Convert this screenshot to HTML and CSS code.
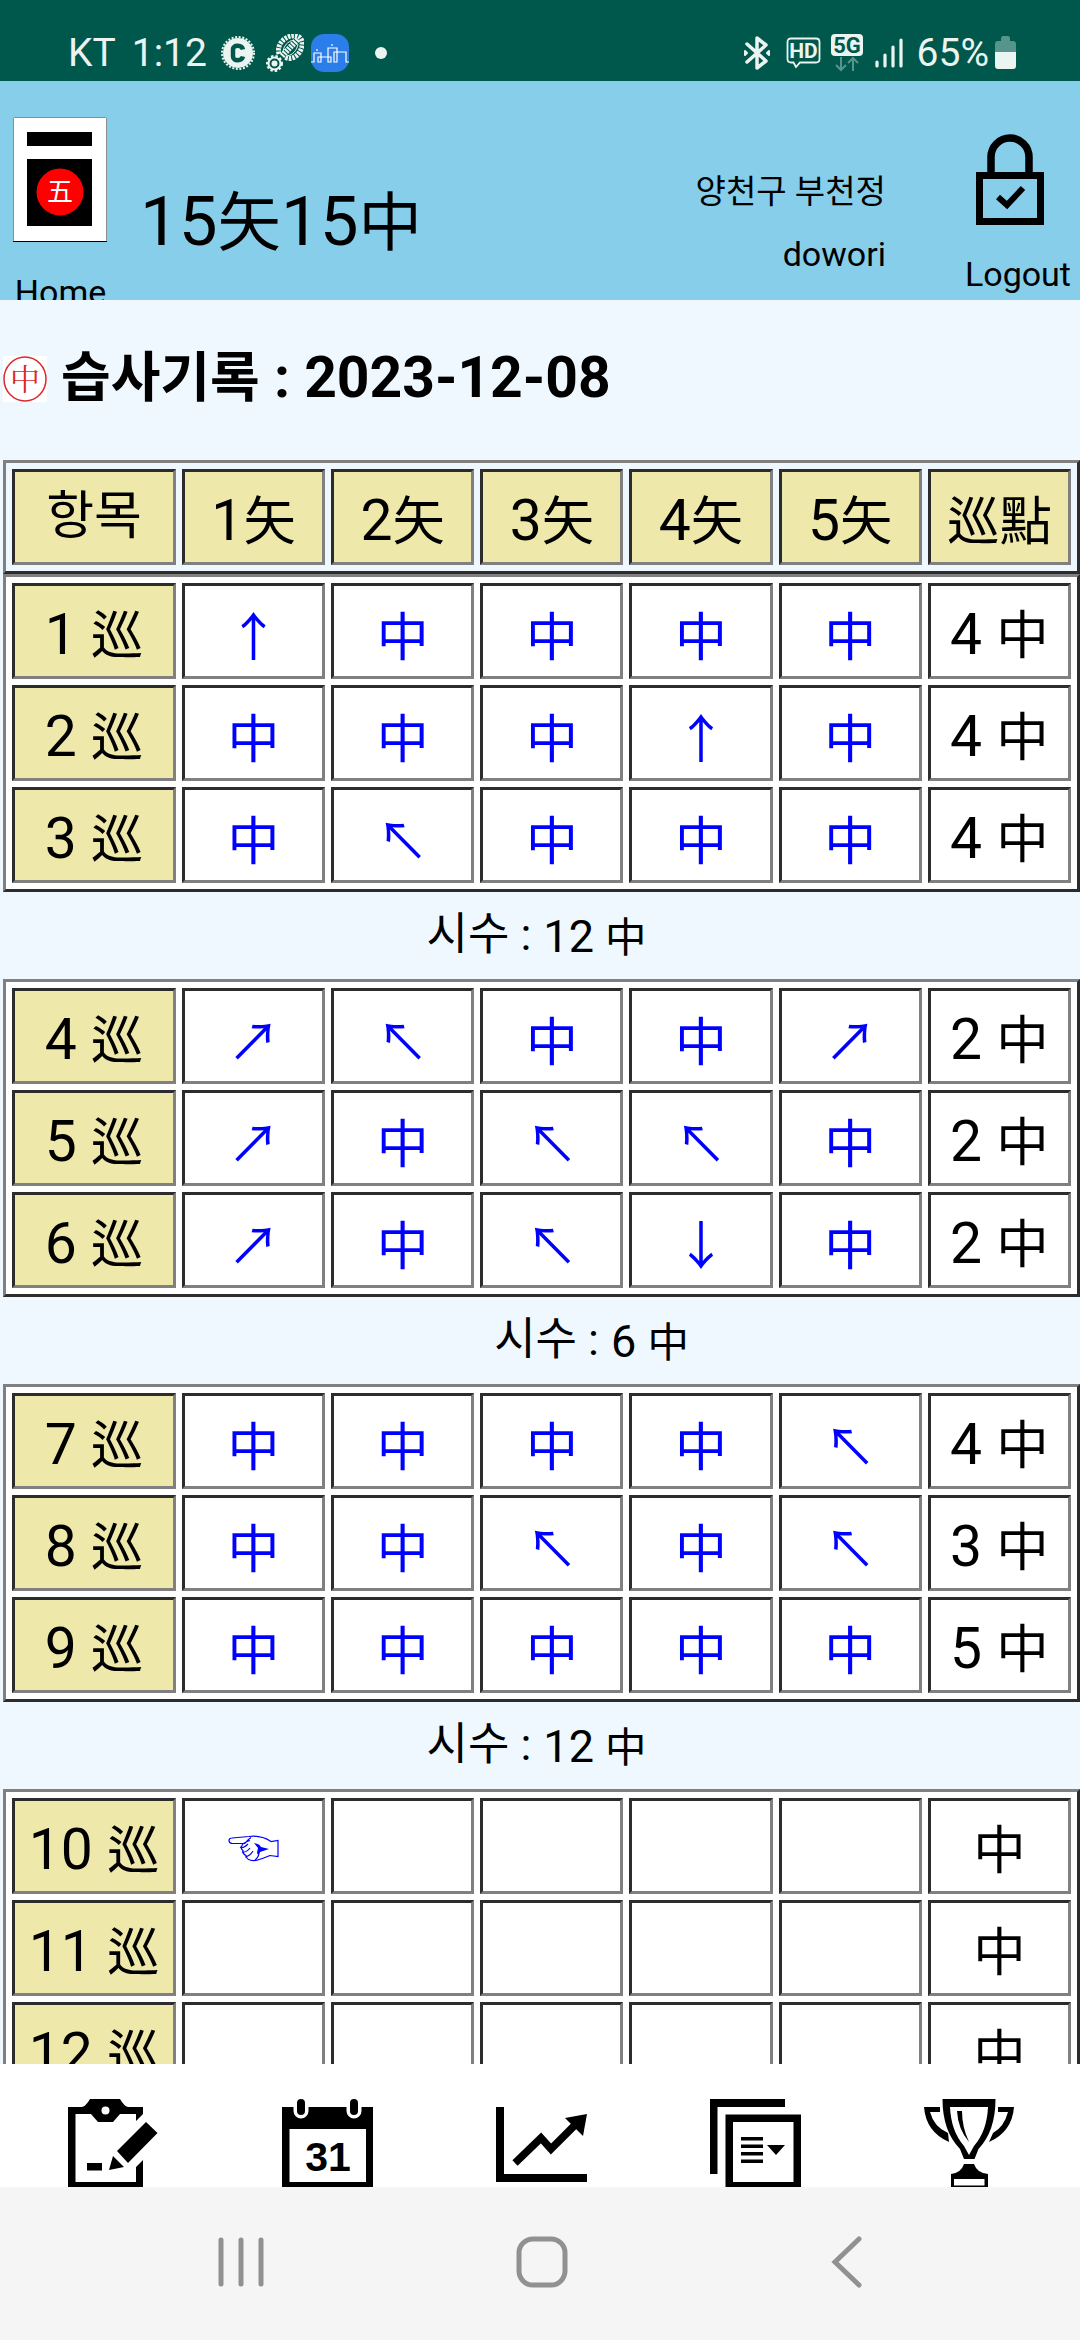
FILE: index.html
```
<!DOCTYPE html>
<html lang="ko">
<head>
    <meta charset="UTF-8">
    <meta name="viewport" content="width=device-width, initial-scale=1.0">
    <title>습사기록</title>
    <link rel="stylesheet" href="styles.css">
</head>
<body>
    <!-- Phone status bar -->
    <div class="status-bar">
        <span class="carrier">KT</span>
        <span class="clock">1:12</span>
        <svg class="badge-icon" width="34" height="36" viewBox="0 0 34 36">
            <circle cx="17" cy="18" r="15" fill="#ebf4f1"/>
            <circle cx="17" cy="18" r="16" fill="none" stroke="#ebf4f1" stroke-width="2" stroke-dasharray="2 1.6"/>
            <path d="M22 14.500C21 10 12 9 12 14.500v7c0 5.500 9 4.500 10 0" fill="none" stroke="#00574b" stroke-width="4.500"/>
        </svg>
        <svg class="shoe-icon" width="38" height="38" viewBox="0 0 38 38" fill="none" stroke="#ebf4f1">
            <circle cx="8.500" cy="29.500" r="6" stroke-width="2"/>
            <circle cx="8.500" cy="29.500" r="7.500" stroke-width="2" stroke-dasharray="2.500 2"/>
            <circle cx="8.500" cy="29.500" r="1.500" stroke-width="3"/>
            <path d="M13 20C10 9 21 0 31 2c8 2 6 15-1 20-4 3-8 3-11 1" stroke-width="5" stroke-dasharray="2.500 1"/>
            <path d="M16 22L32 5" stroke-width="6" stroke-dasharray="2 1"/>
            <path d="M17 19c0-7 5-12 11-13M21 22c6-1 10-6 11-12" stroke-width="1"/>
        </svg>
        <svg class="city-icon" width="38" height="38" viewBox="0 0 38 38">
            <rect width="38" height="38" rx="13" fill="#2b7de9"/>
            <path d="M0 28h3v-9h7v9H7v-5h13v5h-3V14h9v14h-3V18h12v10h3M6 17v-2M21 12v-2" fill="none" stroke="#fff" stroke-width="1.200"/>
        </svg>
        <span class="dot"></span>
        <div class="status-right">
            <svg width="28" height="34" viewBox="0 0 28 34" fill="none" stroke="#ebf4f1" stroke-width="3.500" stroke-linejoin="round" stroke-linecap="round">
                <path d="M4 8l19 17-9 7V2l9 7L4 26"/>
                <path d="M2 15l2 2-2 2zM26 15l-2 2 2 2z" stroke-width="2"/>
            </svg>
            <svg class="hd-icon" width="35" height="32" viewBox="0 0 35 32">
                <path d="M5 1.500h25q3.500 0 3.500 3.500v17q0 3.500-3.500 3.500H14l-4 4.500-2.500-4.500H5q-3.500 0-3.500-3.500V5q0-3.500 3.500-3.500z" fill="none" stroke="#ebf4f1" stroke-width="1.800"/>
                <text x="17.500" y="21" class="hd-text">HD</text>
            </svg>
            <svg width="32" height="38" viewBox="0 0 32 38">
                <rect width="32" height="22" rx="4" fill="#ebf4f1"/>
                <text x="16" y="19" class="g-text">5G</text>
                <path d="M10 23v13M5 31l5 5 5-5M22 37V24M17 29l5-5 5 5" fill="none" stroke="#56958b" stroke-width="2"/>
            </svg>
            <svg class="signal-icon" width="28" height="30" viewBox="0 0 28 30" stroke="#ebf4f1" stroke-width="3.200" stroke-linecap="round">
                <path d="M2 24v4M10 17v11M18 9v19M26 2v26"/>
            </svg>
            <span class="percent">65%</span>
            <svg class="battery-icon" width="22" height="34" viewBox="0 0 22 34">
                <path d="M0 16V8q0-3 3-3h3V3q0-3 2-3h5q2 0 2 3v2h3q3 0 3 3v8z" fill="#56958b"/>
                <path d="M0 16h21v14q0 3-3 3H3q-3 0-3-3z" fill="#ebf4f1"/>
            </svg>
        </div>
    </div>

    <header>
        <a class="home" href="#">
            <svg width="95" height="126" viewBox="0 0 95 126">
                <rect x="0.500" y="0.500" width="93" height="124" rx="1" fill="#fff" stroke="#8c8c8c"/>
                <path d="M0 124.500h94" stroke="#000"/>
                <rect x="14" y="15" width="65" height="14"/>
                <rect x="14" y="42" width="65" height="67"/>
                <circle cx="47" cy="75" r="23.500" fill="#f00"/>
                <text x="47" y="84" class="five">五</text>
            </svg>
            <span>Home</span>
        </a>
        <div class="app-title">15<span class="han">矢</span>15<span class="han">中</span></div>
        <div class="user">
            <div class="club">양천구 부천정</div>
            <div>dowori</div>
        </div>
        <a class="logout" href="#">
            <svg width="84" height="92" viewBox="0 0 84 92" fill="none" stroke="#000">
                <rect x="3.500" y="41.500" width="61" height="46" stroke-width="7"/>
                <path d="M15 40V23a19 19 0 0 1 38 0v17" stroke-width="7.500"/>
                <path d="M22 63l9 8 16-17" stroke-width="6"/>
            </svg>
            <span>Logout</span>
        </a>
    </header>

    <main>
        <h1>
            <svg width="44" height="46" viewBox="0 0 44 46">
                <rect width="44" height="46" fill="#fff"/>
                <ellipse cx="22" cy="23" rx="21" ry="22" fill="none" stroke="#d9292b" stroke-width="1.500"/>
                <text x="22" y="34" class="hit">中</text>
            </svg>
            <span><span class="hangul">습사기록</span> : 2023-12-08</span>
        </h1>

        <table class="head">
            <tr>
                <th class="hangul">항목</th>
                <th>1<span class="han">矢</span></th>
                <th>2<span class="han">矢</span></th>
                <th>3<span class="han">矢</span></th>
                <th>4<span class="han">矢</span></th>
                <th>5<span class="han">矢</span></th>
                <th><span class="han">巡點</span></th>
            </tr>
        </table>

        <!-- Rounds 1 - 3 -->
        <table class="score">
            <tr>
                <th>1 <span class="han">巡</span></th>
                <td class="shot">↑</td>
                <td class="shot">中</td>
                <td class="shot">中</td>
                <td class="shot">中</td>
                <td class="shot">中</td>
                <td>4 <span class="han">中</span></td>
            </tr>
            <tr>
                <th>2 <span class="han">巡</span></th>
                <td class="shot">中</td>
                <td class="shot">中</td>
                <td class="shot">中</td>
                <td class="shot">↑</td>
                <td class="shot">中</td>
                <td>4 <span class="han">中</span></td>
            </tr>
            <tr>
                <th>3 <span class="han">巡</span></th>
                <td class="shot">中</td>
                <td class="shot">↖</td>
                <td class="shot">中</td>
                <td class="shot">中</td>
                <td class="shot">中</td>
                <td>4 <span class="han">中</span></td>
            </tr>
        </table>
        <div class="sum"><span class="sum-label">시수 :</span><span>12 <span class="han">中</span></span></div>

        <!-- Rounds 4 - 6 -->
        <table class="score">
            <tr>
                <th>4 <span class="han">巡</span></th>
                <td class="shot">↗</td>
                <td class="shot">↖</td>
                <td class="shot">中</td>
                <td class="shot">中</td>
                <td class="shot">↗</td>
                <td>2 <span class="han">中</span></td>
            </tr>
            <tr>
                <th>5 <span class="han">巡</span></th>
                <td class="shot">↗</td>
                <td class="shot">中</td>
                <td class="shot">↖</td>
                <td class="shot">↖</td>
                <td class="shot">中</td>
                <td>2 <span class="han">中</span></td>
            </tr>
            <tr>
                <th>6 <span class="han">巡</span></th>
                <td class="shot">↗</td>
                <td class="shot">中</td>
                <td class="shot">↖</td>
                <td class="shot">↓</td>
                <td class="shot">中</td>
                <td>2 <span class="han">中</span></td>
            </tr>
        </table>
        <div class="sum indent"><span class="sum-label">시수 :</span><span>6 <span class="han">中</span></span></div>

        <!-- Rounds 7 - 9 -->
        <table class="score">
            <tr>
                <th>7 <span class="han">巡</span></th>
                <td class="shot">中</td>
                <td class="shot">中</td>
                <td class="shot">中</td>
                <td class="shot">中</td>
                <td class="shot">↖</td>
                <td>4 <span class="han">中</span></td>
            </tr>
            <tr>
                <th>8 <span class="han">巡</span></th>
                <td class="shot">中</td>
                <td class="shot">中</td>
                <td class="shot">↖</td>
                <td class="shot">中</td>
                <td class="shot">↖</td>
                <td>3 <span class="han">中</span></td>
            </tr>
            <tr>
                <th>9 <span class="han">巡</span></th>
                <td class="shot">中</td>
                <td class="shot">中</td>
                <td class="shot">中</td>
                <td class="shot">中</td>
                <td class="shot">中</td>
                <td>5 <span class="han">中</span></td>
            </tr>
        </table>
        <div class="sum"><span class="sum-label">시수 :</span><span>12 <span class="han">中</span></span></div>

        <!-- Rounds 10 - 12 -->
        <table class="score">
            <tr>
                <th>10 <span class="han">巡</span></th>
                <td class="shot">
                    <!-- pointing hand: next shot to enter -->
                    <svg class="hand" width="52" height="28" viewBox="0 0 52 28">
                        <path d="M17 8.500H4Q1 8 1 5.500 1 3 4 3l17-1.500q12-1.500 22 5l7-1v16l-8-1q-7 3-14 5-9 1-10-5-4-2-3-5-3-2-1-5 1-3 8-5M17 8.500q3-4 6-6M12 12q3 2 8-3M14 17q4 1 8-4M17 22q5-1 8-6M27 25q4-3 4-8" fill="none" stroke="#00f" stroke-width="1.200"/>
                        <path d="M26 8q6 1 7 4l8 2-9 3q-2 4-3 1l1-5z" fill="#00f"/>
                    </svg>
                </td>
                <td></td>
                <td></td>
                <td></td>
                <td></td>
                <td><span class="han">中</span></td>
            </tr>
            <tr>
                <th>11 <span class="han">巡</span></th>
                <td></td>
                <td></td>
                <td></td>
                <td></td>
                <td></td>
                <td><span class="han">中</span></td>
            </tr>
            <tr>
                <th>12 <span class="han">巡</span></th>
                <td></td>
                <td></td>
                <td></td>
                <td></td>
                <td></td>
                <td><span class="han">中</span></td>
            </tr>
        </table>
    </main>

    <nav class="tabs">
        <a href="#" aria-label="기록">
            <svg width="91" height="88" viewBox="0 0 91 88">
                <path d="M0 8h14q4-1 8-8h30q4 7 8 8h15v7l-7 7v-7H52l-7 8H30l-7-8H7.500v68H68V68l7-7v27H0z"/>
                <circle cx="37.500" cy="11.500" r="4" fill="#fff"/>
                <path d="M78 23l11.500 11L60 64 49 52zM45 57l11 11-15 3zM19 64h15v7.500H19z"/>
            </svg>
        </a>
        <a href="#" aria-label="달력">
            <svg width="91" height="88" viewBox="0 0 91 88">
                <path d="M0 8h91v80H0zM7.500 30v53H84V30z" fill-rule="evenodd"/>
                <path d="M19 0v12M72 0v12" stroke="#fff" stroke-width="15" stroke-linecap="round"/>
                <path d="M19 4v8M72 4v8" stroke="#000" stroke-width="8" stroke-linecap="round"/>
                <text x="46" y="72" class="day">31</text>
            </svg>
        </a>
        <a href="#" aria-label="통계">
            <svg width="91" height="88" viewBox="0 0 91 88">
                <path d="M0 8h8v67h83v8H0z"/>
                <path d="M19 64l26-25 10 11 26-26" fill="none" stroke="#000" stroke-width="7.500"/>
                <path d="M91 15l-22 4 18 18z"/>
            </svg>
        </a>
        <a href="#" aria-label="목록">
            <svg width="91" height="88" viewBox="0 0 91 88">
                <path d="M0 0h75v8H7.500v67H0z"/>
                <path d="M15.500 15.500H91V88H15.500zM23 23v60h60.500V23z" fill-rule="evenodd"/>
                <path d="M31 38h22v3.500H31zM31 45.500h22V49H31zM31 53h22v3.500H31zM31 60.500h22V64H31zM57 46h18l-9 10z"/>
            </svg>
        </a>
        <a href="#" aria-label="대회">
            <svg width="91" height="88" viewBox="0 0 91 88">
                <path d="M18.500 0h53q0 32-17 50l-4 10H40l-4-10Q18.500 32 18.500 0zM26 8q1 24 14 39l5 9 5-9Q63 32 64 8z" fill-rule="evenodd"/>
                <path d="M33 12h5q0 16 7 31Q34 30 33 12z"/>
                <path d="M0 8h16v5H6q4 15 18 21l1 9Q2 33 0 8zM90 8H74v5h10q-4 15-15 21l-4 9Q88 33 90 8z"/>
                <path d="M40 65h10q3 9 14 10v13H27V75q10-1 13-10zM30 80v6.500h30.500V80z" fill-rule="evenodd"/>
            </svg>
        </a>
    </nav>

    <!-- Phone navigation bar -->
    <div class="nav-bar">
        <button aria-label="최근 앱">
            <svg width="52" height="52" viewBox="0 0 52 52"><path d="M6 4v44M26 4v44M46 4v44"/></svg>
        </button>
        <button aria-label="홈">
            <svg width="52" height="52" viewBox="0 0 52 52"><rect x="3" y="3" width="46" height="46" rx="14"/></svg>
        </button>
        <button aria-label="뒤로">
            <svg width="52" height="52" viewBox="0 0 52 52"><path d="M42 3L18 26l24 23"/></svg>
        </button>
    </div>
</body>
</html>
```
FILE: styles.css
```
/* General styles */
* {
    box-sizing: border-box;
}

body {
    display: flex;
    flex-direction: column;
    height: 100vh;
    margin: 0;
    font-family: Roboto, "Noto Sans CJK KR", sans-serif;
    background-color: aliceblue;
    color: #000;
    overflow: hidden;
}

a {
    color: #000;
    text-decoration: none;
}

svg {
    display: block;
    flex-shrink: 0;
}

/* Status bar */
.status-bar {
    display: flex;
    align-items: center;
    padding: 25px 63px 0 68px;
    height: 81px;
    background-color: #00574b;
    color: #ebf4f1;
    font-size: 39px;
    line-height: 56px;
}

.clock {
    margin-left: 16px;
}

.badge-icon {
    margin-left: 14px;
}

.shoe-icon {
    margin-left: 11px;
}

.city-icon {
    margin-left: 7px;
}

.dot {
    width: 12px;
    height: 12px;
    margin-left: 26px;
    border-radius: 50%;
    background-color: #ebf4f1;
}

.status-right {
    display: flex;
    align-items: center;
    margin-left: auto;
}

.hd-icon {
    margin: 0 10px 0 15px;
}

.hd-text {
    font-size: 21px;
    font-weight: bold;
    text-anchor: middle;
    fill: #ebf4f1;
}

.g-text {
    font-size: 22px;
    font-weight: bold;
    text-anchor: middle;
    fill: #00574b;
}

.signal-icon {
    margin: 0 14px 0 12px;
}

.battery-icon {
    margin-left: 6px;
}

/* Header */
header {
    display: flex;
    flex-shrink: 0;
    height: 219px;
    padding: 36px 9px 0 13px;
    background-color: skyblue;
    font-size: 34px;
    line-height: 40px;
    overflow: hidden;
}

.home,
.logout {
    display: flex;
    flex-direction: column;
    align-items: center;
}

.home {
    gap: 29px;
}

.five {
    font-family: "Noto Sans CJK SC", sans-serif;
    font-size: 26px;
    text-anchor: middle;
    fill: #fff;
}

.app-title {
    margin: 60px 0 0 32px;
    font-size: 69px;
    line-height: 90px;
}

.user {
    margin: 44px 79px 0 auto;
    text-align: right;
    line-height: 62px;
}

.club {
    font-size: 33px;
}

.logout {
    padding-top: 17px;
    gap: 28px;
}

.han {
    font-family: "Noto Sans CJK JP", sans-serif;
    font-size: 92%;
    line-height: 1;
}

/* Record title */
main {
    flex: 1;
    min-height: 0;
    padding-left: 3px;
    overflow: hidden;
}

h1 {
    display: flex;
    align-items: center;
    gap: 14px;
    margin: 0;
    padding: 36px 0 39px;
    font-size: 57px;
    line-height: 84px;
}

h1 .hangul {
    font-size: 54px;
}

.hit {
    font-family: "Noto Serif CJK SC", "Noto Sans CJK SC", sans-serif;
    font-size: 30px;
    font-weight: normal;
    text-anchor: middle;
    fill: #d9292b;
}

/* Score tables */
table {
    table-layout: fixed;
    width: 100%;
    border: 3px outset gray;
    border-spacing: 6px;
    font-size: 57px;
    line-height: 80px;
}

.score {
    background-color: #fff;
}

th,
td {
    height: 96px;
    padding: 8px 0 0;
    border: 3px inset gray;
    font-weight: normal;
    text-align: center;
    white-space: nowrap;
}

.head th,
.score th {
    background-color: palegoldenrod;
}

th:first-child {
    width: 164px;
}

th.hangul {
    padding: 0;
    font-size: 52px;
}

.shot {
    padding-top: 5px;
    color: #00f;
    font-family: "Noto Sans CJK JP", sans-serif;
    font-size: 52px;
}

.hand {
    margin: 0 auto;
}

/* Hit count under each table */
.sum {
    display: flex;
    justify-content: center;
    align-items: center;
    gap: 12px;
    height: 87px;
    padding: 2px 10px 0 0;
    font-size: 45px;
    line-height: 80px;
}

.sum.indent {
    padding: 2px 0 0 100px;
}

.sum-label {
    padding-bottom: 4px;
}

/* Bottom tabs */
.tabs {
    display: flex;
    flex-shrink: 0;
    padding: 35px 3px 0 6px;
    background-color: #fff;
}

.tabs a {
    display: flex;
    flex: 1;
    justify-content: center;
}

.day {
    font-family: "Liberation Sans", sans-serif;
    font-size: 41px;
    font-weight: bold;
    text-anchor: middle;
}

/* Navigation bar */
.nav-bar {
    display: flex;
    flex-shrink: 0;
    padding: 49px 86px 52px 90px;
    background-color: #f5f5f5;
}

.nav-bar button {
    display: flex;
    flex: 1;
    justify-content: center;
    padding: 0;
    border: none;
    background: none;
}

.nav-bar svg {
    fill: none;
    stroke: #919191;
    stroke-width: 5;
    stroke-linecap: round;
}
```
